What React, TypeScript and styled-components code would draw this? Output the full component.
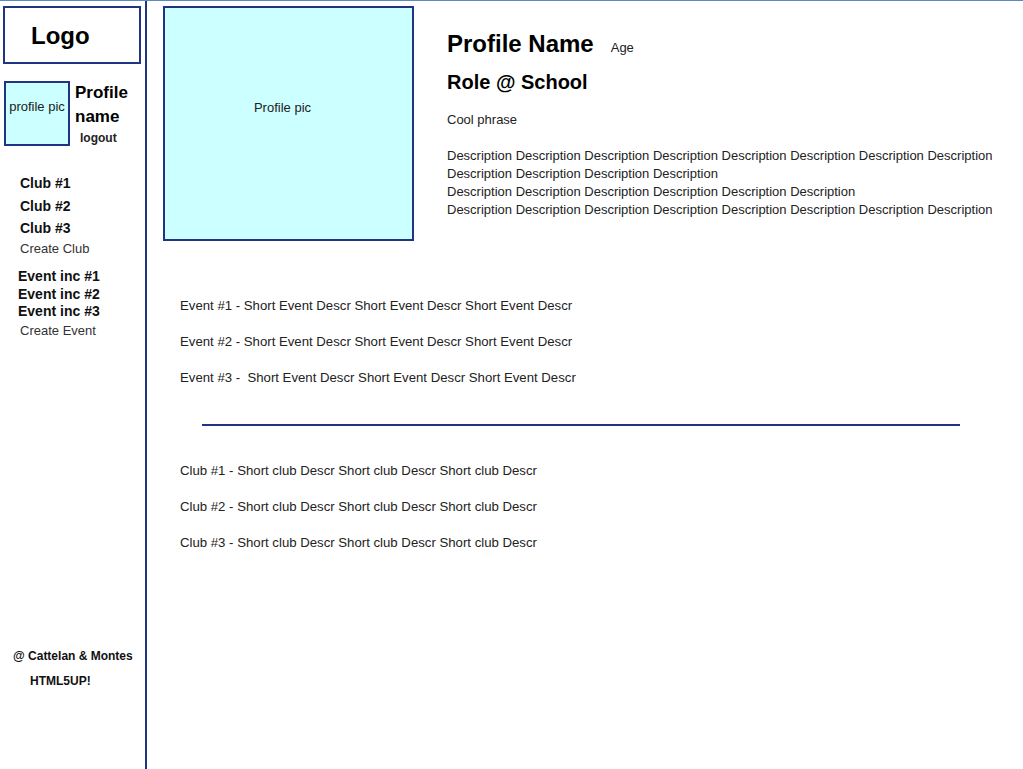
import React from 'react'
import styled, { createGlobalStyle } from 'styled-components'

const GlobalStyle = createGlobalStyle`
    html, body {
        margin: 0;
        padding: 0;
        background: #fff;
        font-family: "Liberation Sans", Arial, sans-serif;
        color: #222;
    }
`

const navy = '#1f3584'
const cyan = '#ccffff'

const Page = styled.div`
    display: flex;
    height: 100vh;
    border-top: 1px solid #5b8bc0;
    box-sizing: border-box;
`

const Sidebar = styled.aside`
    width: 147px;
    flex-shrink: 0;
    border-right: 2px solid ${navy};
    display: flex;
    flex-direction: column;
    padding-bottom: 80px;
    box-sizing: border-box;
`

const LogoBox = styled.div`
    margin: 5px 0 0 3px;
    width: 138px;
    height: 58px;
    box-sizing: border-box;
    border: 2px solid ${navy};
    display: flex;
    align-items: center;
    padding: 2px 0 0 26px;
    font-size: 24px;
    font-weight: bold;
    color: #000;
`

const UserRow = styled.div`
    display: flex;
    margin: 17px 0 0 4px;
`

const SmallPic = styled.div`
    width: 66px;
    height: 65px;
    box-sizing: border-box;
    border: 2px solid ${navy};
    background: ${cyan};
    font-size: 13px;
    line-height: 16px;
    padding-top: 16px;
    text-align: center;
    white-space: nowrap;
    color: #222;
`

const UserInfo = styled.div`
    margin-left: 5px;
`

const UserName = styled.div`
    font-size: 17px;
    font-weight: bold;
    line-height: 24px;
    color: #000;
`

const Logout = styled.div`
    font-size: 12px;
    font-weight: bold;
    line-height: 14px;
    margin: 2px 0 0 5px;
`

const NavGroup = styled.div<{ $top: number; $left: number }>`
    margin-top: ${p => p.$top}px;
    padding-left: ${p => p.$left}px;
`

const NavItem = styled.div<{ $lh: number; $bold?: boolean; $indent?: number }>`
    font-size: ${p => (p.$bold ? 14 : 13)}px;
    font-weight: ${p => (p.$bold ? 'bold' : 'normal')};
    line-height: ${p => p.$lh}px;
    padding-left: ${p => p.$indent || 0}px;
    color: ${p => (p.$bold ? '#111' : '#333')};
`

const Footer = styled.div`
    margin-top: auto;
    padding-left: 13px;
    font-size: 12px;
    font-weight: bold;
    line-height: 16px;
    color: #111;
`

const FooterLine = styled.div<{ $indent?: number }>`
    padding-left: ${p => p.$indent || 0}px;
    & + & {
        margin-top: 9px;
    }
`

const Main = styled.main`
    flex: 1;
    padding: 5px 0 0 16px;
`

const ProfileTop = styled.div`
    display: flex;
`

const BigPic = styled.div`
    width: 251px;
    height: 235px;
    flex-shrink: 0;
    box-sizing: border-box;
    border: 2px solid ${navy};
    background: ${cyan};
    font-size: 13px;
    line-height: 16px;
    padding-top: 92px;
    text-align: center;
    padding-right: 12px;
`

const Info = styled.div`
    margin-left: 33px;
    padding-top: 24px;
`

const NameRow = styled.div`
    display: flex;
    align-items: baseline;
    gap: 17px;
`

const Name = styled.h1`
    margin: 0;
    font-size: 24px;
    line-height: 28px;
    font-weight: bold;
    color: #000;
`

const Age = styled.span`
    font-size: 13px;
`

const Role = styled.h2`
    margin: 12px 0 0;
    font-size: 20px;
    line-height: 24px;
    font-weight: bold;
    color: #000;
`

const Phrase = styled.p`
    margin: 17px 0 0;
    font-size: 13px;
    line-height: 18px;
`

const Desc = styled.p`
    margin: 18px 0 0;
    font-size: 13px;
    line-height: 18px;
`

const List = styled.div<{ $top: number }>`
    margin-top: ${p => p.$top}px;
    padding-left: 17px;
    display: flex;
    flex-direction: column;
    gap: 18px;
`

const ListItem = styled.div`
    font-size: 13.2px;
    line-height: 18px;
    white-space: pre;
`

const Divider = styled.hr`
    margin: 37px 0 0 39px;
    width: 758px;
    height: 2px;
    border: none;
    background: ${navy};
`

const descLines = [8, 4, 6, 8]

const events = [
    'Event #1 - Short Event Descr Short Event Descr Short Event Descr',
    'Event #2 - Short Event Descr Short Event Descr Short Event Descr',
    'Event #3 -  Short Event Descr Short Event Descr Short Event Descr',
]

const clubs = [1, 2, 3].map(n => `Club #${n} - Short club Descr Short club Descr Short club Descr`)

export default function App() {
    return (
        <>
            <GlobalStyle />
            <Page>
                <Sidebar>
                    <LogoBox>Logo</LogoBox>
                    <UserRow>
                        <SmallPic>profile pic</SmallPic>
                        <UserInfo>
                            <UserName>Profile</UserName>
                            <UserName>name</UserName>
                            <Logout>logout</Logout>
                        </UserInfo>
                    </UserRow>
                    <NavGroup $top={26} $left={20}>
                        <NavItem $lh={22.5} $bold>Club #1</NavItem>
                        <NavItem $lh={22.5} $bold>Club #2</NavItem>
                        <NavItem $lh={22} $bold>Club #3</NavItem>
                        <NavItem $lh={19}>Create Club</NavItem>
                    </NavGroup>
                    <NavGroup $top={10} $left={18}>
                        <NavItem $lh={17.5} $bold>Event inc #1</NavItem>
                        <NavItem $lh={17.5} $bold>Event inc #2</NavItem>
                        <NavItem $lh={17.5} $bold>Event inc #3</NavItem>
                        <NavItem $lh={20} $indent={2}>Create Event</NavItem>
                    </NavGroup>
                    <Footer>
                        <FooterLine>@ Cattelan &amp; Montes</FooterLine>
                        <FooterLine $indent={17}>HTML5UP!</FooterLine>
                    </Footer>
                </Sidebar>
                <Main>
                    <ProfileTop>
                        <BigPic>Profile pic</BigPic>
                        <Info>
                            <NameRow>
                                <Name>Profile Name</Name>
                                <Age>Age</Age>
                            </NameRow>
                            <Role>Role @ School</Role>
                            <Phrase>Cool phrase</Phrase>
                            <Desc>
                                {descLines.map((n, i) => (
                                    <React.Fragment key={i}>
                                        {Array(n).fill('Description').join(' ')}
                                        {i < descLines.length - 1 && <br />}
                                    </React.Fragment>
                                ))}
                            </Desc>
                        </Info>
                    </ProfileTop>
                    <List $top={56}>
                        {events.map(e => <ListItem key={e}>{e}</ListItem>)}
                    </List>
                    <Divider />
                    <List $top={36}>
                        {clubs.map(c => <ListItem key={c}>{c}</ListItem>)}
                    </List>
                </Main>
            </Page>
        </>
    )
}
